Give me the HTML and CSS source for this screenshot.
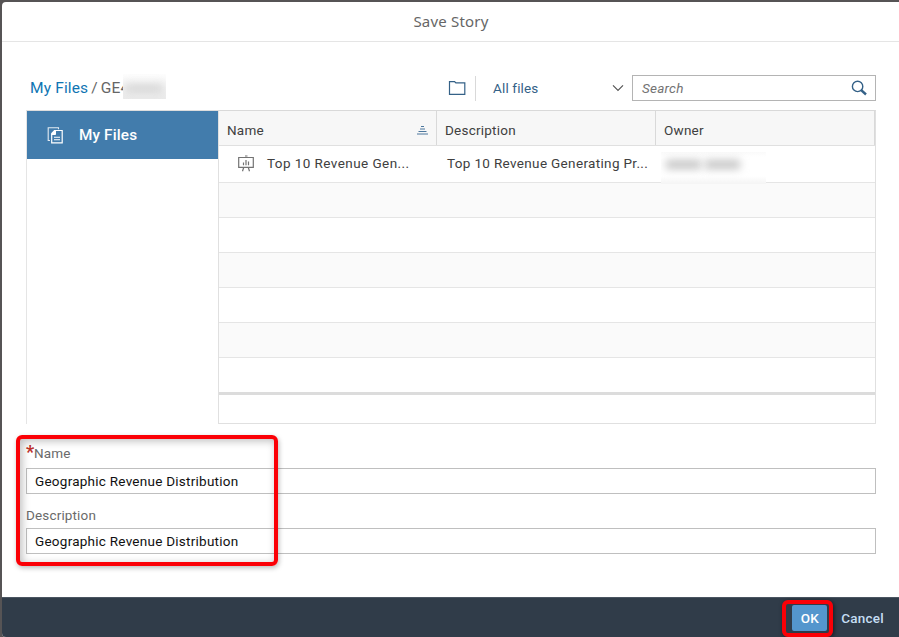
FILE: index.html
```
<!DOCTYPE html>
<html lang="en">
<head>
<meta charset="utf-8">
<title>Save Story</title>
<link rel="stylesheet" href="styles.css">
</head>
<body>
<div class="dialog">
  <header class="title"><span>Save Story</span></header>
  <main class="content">
    <div class="toolbar">
      <nav class="crumbs"><a>My Files</a><span class="slash">/</span><span>GE4</span><div class="redacted"><i></i></div></nav>
      <div class="folder">
        <svg width="18" height="16" viewBox="0 0 18 16" fill="none" stroke="#346187" stroke-width="1.2"><path d="M1.5 14.4V1.6h5l1.3 1.2h9v11.6z"/></svg>
      </div>
      <div class="filter"><span>All files</span>
        <svg width="12" height="8" viewBox="0 0 12 8" fill="none" stroke="#555" stroke-width="1.2"><path d="M1 1.3l5 5 5-5"/></svg>
      </div>
      <div class="search"><span>Search</span>
        <svg width="16" height="16" viewBox="0 0 16 16" fill="none" stroke="#346187"><circle cx="6.6" cy="6.4" r="5.2" stroke-width="1.4"/><path d="M10.2 10.2l4.8 4.3" stroke-width="2.4"/></svg>
      </div>
    </div>
    <div class="browser">
      <aside class="side">
        <div class="side-item">
          <svg width="17" height="17" viewBox="0 0 17 17" fill="none" stroke="#fff"><path d="M3 13.5H1.2V.7h10.3v1.5" stroke-width="1.1" opacity=".85"/><path d="M7.5 3.5h7.7v12.3H4.7V6.5z" stroke-width="1.2"/><path d="M4.5 7.5L8.5 3.5v4z" fill="#fff"/><path d="M7 10.2h6M7 12.7h6" stroke-width="1.1"/></svg>
          <span>My Files</span>
        </div>
      </aside>
      <section class="table">
        <div class="row head">
          <div class="cell c1"><span>Name</span>
            <svg width="11" height="9" viewBox="0 0 11 9" stroke="#4c779d" stroke-width="1"><path d="M4 .5h3M3 3h5M1.5 5.5h8M0 8h11"/></svg>
          </div>
          <div class="cell c2"><span>Description</span></div>
          <div class="cell c3"><span>Owner</span></div>
        </div>
        <div class="row first">
          <div class="cell c1">
            <svg class="story" width="16" height="17" viewBox="0 0 16 17" fill="none" stroke="#737373"><path d="M.7 2.5h14.6v9.9H.7zM7 1h2.5M5.7 12.5l-1.2 3.8M10.3 12.5l1.2 3.8M5.5 10.3V7.5M8 10.3V5M10.5 10.3V6.5" stroke-width="1.2"/></svg>
            <span class="t-name">Top 10 Revenue Gen...</span>
          </div>
          <div class="cell c2"><span class="t-desc">Top 10 Revenue Generating Pr...</span></div>
          <div class="cell c3"><div class="owner-mask"><i></i><i></i></div></div>
        </div>
        <div class="row alt"></div>
        <div class="row"></div>
        <div class="row alt"></div>
        <div class="row"></div>
        <div class="row alt"></div>
        <div class="row last"></div>
        <div class="row foot"></div>
      </section>
    </div>
    <form class="fields">
      <label class="lab-name"><b>*</b><span>Name</span></label>
      <div class="input"><span>Geographic Revenue Distribution</span></div>
      <label class="lab-desc"><span>Description</span></label>
      <div class="input"><span>Geographic Revenue Distribution</span></div>
      <div class="mark mark-fields"></div>
    </form>
  </main>
  <footer class="footer">
    <div class="ok"><span>OK</span><div class="mark mark-ok"></div></div>
    <div class="cancel"><span>Cancel</span></div>
  </footer>
</div>
</body>
</html>
```
FILE: styles.css
```
* { box-sizing: border-box; }
html, body { height: 100%; margin: 0; overflow: hidden; }
body {
  background: #565455;
  padding: 2px 0 0 2px;
  font: 13.5px/18px Roboto, "Noto Sans", sans-serif;
  letter-spacing: .23px;
  color: #404040;
}
svg { display: block; flex: none; }
span { white-space: nowrap; }
.dialog { height: 635px; display: flex; flex-direction: column; background: #fff; border-radius: 4px 0 0 4px; overflow: hidden; }
.title {
  height: 40px; flex: none; display: flex; align-items: center; justify-content: center;
  padding: 0 0 2px 1px; letter-spacing: .2px;
  border-bottom: 1px solid #e5e5e5; color: #666;
  font: 15px/20px "Noto Sans", sans-serif;
}
.content { flex: 1; padding: 33px 23px 0 24px; }
.toolbar { display: flex; height: 26px; align-items: center; }
.crumbs { display: flex; align-items: center; width: 422px; padding-left: 4px; font-size: 15.5px; letter-spacing: .15px; color: #666; white-space: nowrap; }
.crumbs a { color: #0f75b3; }
.slash { margin: 0 3px; }
.redacted { position: relative; flex: none; margin: -4px 0 0 -6px; width: 43px; height: 25px; background: linear-gradient(#fdfdfd, #ebebeb); overflow: hidden; }
.redacted i { display: block; margin: 10px 3px 0 2px; height: 9px; background: #d6d6d6; filter: blur(4px); }
.folder { width: 28px; height: 25px; display: flex; align-items: center; border-right: 1px solid #d9d9d9; }
.filter { width: 156px; padding: 0 8px 0 17px; display: flex; align-items: center; justify-content: space-between; color: #346187; letter-spacing: .15px; }
.search { width: 244px; height: 26px; border: 1px solid #b4b4b4; display: flex; align-items: center; justify-content: space-between; padding: 0 8px 0 9px; font-style: italic; color: #737373; }
.browser { display: flex; height: 314px; margin-top: 9px; }
.side { width: 192px; border-left: 1px solid #e5e5e5; border-top: 1px solid #ddd; }
.side-item { height: 48px; background: #427cac; color: #fff; display: flex; align-items: center; padding-left: 20px; gap: 15px; font-size: 15.3px; font-weight: 500; letter-spacing: .15px; }
.table { width: 658px; border: 1px solid #e0e0e0; border-top-color: #d9d9d9; }
.row { height: 35px; border-bottom: 1px solid #e5e5e5; display: flex; }
.row.alt { background: #fafafa; }
.row.head { background: #f7f7f7; border-bottom-color: #e0e0e0; }
.row.first { height: 37px; }
.row.last { height: 37px; border-bottom: 3px solid #dcdcdc; }
.row.foot { height: 28px; border: 0; }
.cell { display: flex; align-items: center; }
.c1 { width: 218px; padding: 0 8px; }
.c2 { width: 219px; padding-left: 8px; }
.c3 { flex: 1; padding-left: 8px; }
.head .cell { border-right: 1px solid #d9d9d9; padding-top: 4px; }
.head .c1 { justify-content: space-between; }
.head .c1 svg { margin-top: 0; }
.first .c1 { padding-left: 19px; gap: 13px; }
.first .c2 { padding-left: 10px; }
.first .cell { padding-bottom: 2px; }
.t-name { letter-spacing: .43px; }
.t-desc { letter-spacing: .34px; }
.first .c3 { padding: 0 0 0 6px; align-items: flex-end; }
.owner-mask { display: flex; gap: 4px; width: 105px; height: 32px; margin: 0 0 -2px -1px; padding: 8px 0 0 5px; overflow: hidden; background: linear-gradient(#fafafa, #fff 15%, #fff 75%, #f4f4f4); }
.owner-mask i { width: 35px; height: 9px; background: #c4c4c4; filter: blur(4px); }
.fields { position: relative; padding-top: 20px; }
.fields label { display: flex; height: 18px; color: #6a6a6a; letter-spacing: .15px; }
.lab-name b { width: 8px; color: #c0322c; font-size: 18px; line-height: 15px; }
.input { height: 26px; border: 1px solid #bfbfbf; display: flex; align-items: center; padding-left: 8px; color: #111; letter-spacing: .25px; }
.lab-name { margin-bottom: 6px; }
.lab-desc { margin: 13px 0 3px; }
.lab-desc span { margin-top: -1px; }
.mark { position: absolute; border: 4px solid #fb0006; border-radius: 6px; }
.mark-fields { left: -10px; top: 11px; width: 262px; height: 131px; box-shadow: 1px 2px 5px #0004, inset 2px 2px 8px #0004; }
.footer { height: 40px; flex: none; background: #303c49; border-top: 1px solid #4a5561; display: flex; align-items: center; justify-content: flex-end; padding: 1px 15px 0 0; gap: 14px; font-weight: 500; color: #c5def3; }
.ok { position: relative; width: 35px; height: 26px; background: #5496cd; border-radius: 2px; color: #fff; display: flex; align-items: center; justify-content: center; }
.mark-ok { left: -10px; top: -5px; width: 51px; height: 37px; box-shadow: 1px 1px 4px #0008; }
```
